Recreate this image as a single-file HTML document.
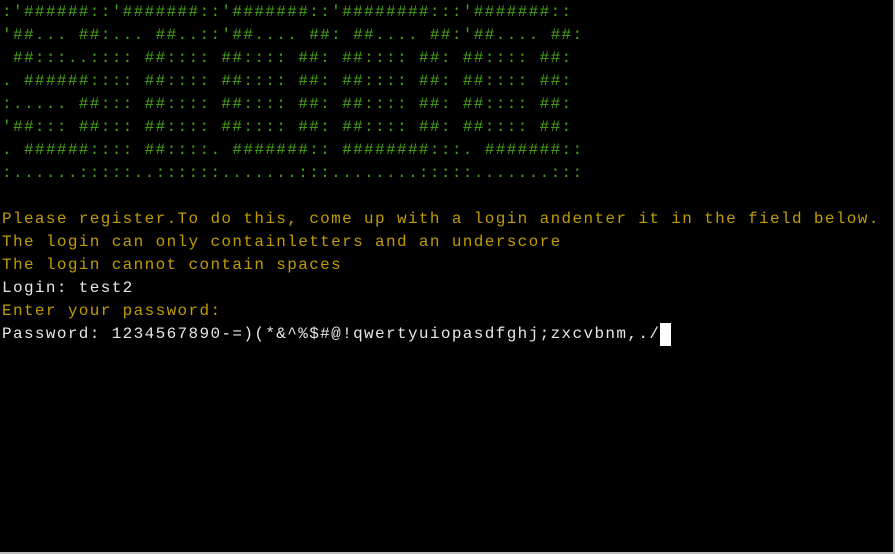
<!DOCTYPE html>
<html><head><meta charset="utf-8"><style>
html,body{margin:0;padding:0;background:#000;}
body{width:895px;height:554px;border-right:2px solid #bbb;border-bottom:2px solid #bbb;box-sizing:border-box;overflow:hidden;position:relative;}
pre{margin:0;position:absolute;left:2px;top:1px;font-family:"Liberation Mono",monospace;font-size:16px;letter-spacing:1.37px;line-height:23px;white-space:pre;}
.g{color:#45a514;}
.y{color:#c19c00;}
.w{color:#e6e6e6;}
.cur{display:inline-block;width:11px;height:23px;background:#fff;vertical-align:top;}
</style></head><body><pre><span class="g">:'######::'#######::'#######::'########:::'#######::
'##... ##:... ##..::'##.... ##: ##.... ##:'##.... ##:
 ##:::..:::: ##:::: ##:::: ##: ##:::: ##: ##:::: ##:
. ######:::: ##:::: ##:::: ##: ##:::: ##: ##:::: ##:
:..... ##::: ##:::: ##:::: ##: ##:::: ##: ##:::: ##:
'##::: ##::: ##:::: ##:::: ##: ##:::: ##: ##:::: ##:
. ######:::: ##::::. #######:: ########:::. #######::
:......:::::..::::::.......:::........:::::.......:::</span>

<span class="y">Please register.To do this, come up with a login andenter it in the field below.
The login can only containletters and an underscore
The login cannot contain spaces</span>
<span class="w">Login: test2</span>
<span class="y">Enter your password:</span>
<span class="w">Password: 1234567890-=)(*&amp;^%$#@!qwertyuiopasdfghj;zxcvbnm,./<span class="cur"></span></span></pre></body></html>
